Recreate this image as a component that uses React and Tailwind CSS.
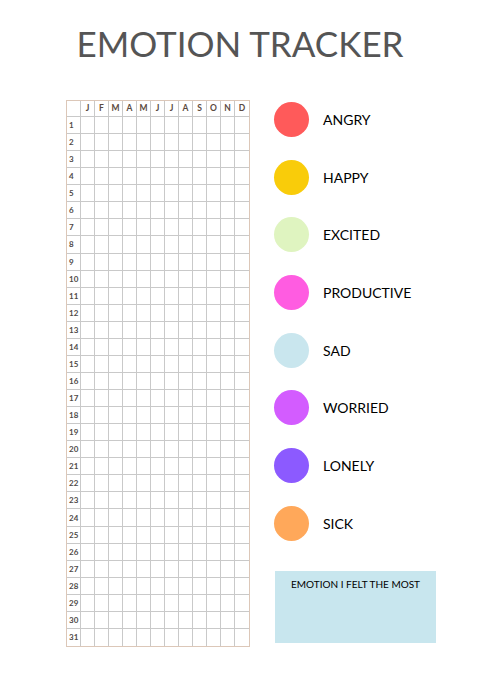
import React from 'react';

const months = ["J", "F", "M", "A", "M", "J", "J", "A", "S", "O", "N", "D"];
const days = Array.from({ length: 31 }, (_, i) => i + 1);

const emotions = [
    { name: "ANGRY", color: "bg-[#ff5a5a]" },
    { name: "HAPPY", color: "bg-[#f9cc0a]" },
    { name: "EXCITED", color: "bg-[#dff4c0]" },
    { name: "PRODUCTIVE", color: "bg-[#ff5ce1]" },
    { name: "SAD", color: "bg-[#c9e6ee]" },
    { name: "WORRIED", color: "bg-[#d35cff]" },
    { name: "LONELY", color: "bg-[#8c5aff]" },
    { name: "SICK", color: "bg-[#ffa85a]" },
];

const App = () => {
    return (
        <div className="w-[480px] h-[679px] bg-white overflow-hidden font-['Lato',sans-serif]">
            <h1 className="pt-[21px] text-center text-[35px] leading-[44px] font-normal text-[#555555] font-['Lato',sans-serif]">
                EMOTION TRACKER
            </h1>

            <div className="flex mt-[35px]">
                {/* year grid */}
                <div className="ml-[66px] w-[184px] h-[547px] border border-[#dcc7b8] grid grid-cols-[14px_repeat(12,1fr)] grid-rows-[16px_repeat(31,1fr)]">
                    <div className="border-r border-b border-[#c9c9c9]" />
                    {months.map((m, i) => (
                        <div
                            key={i}
                            className={`flex items-center justify-center text-[8.5px] font-bold text-[#5b4a40] border-b border-[#c9c9c9] ${i < 11 ? "border-r" : ""}`}
                        >
                            {m}
                        </div>
                    ))}
                    {days.map((d) => (
                        <React.Fragment key={d}>
                            <div className={`flex items-center pl-[2px] text-[8px] font-bold text-[#4f4a47] border-r border-[#c9c9c9] ${d < 31 ? "border-b" : ""}`}>
                                {d}
                            </div>
                            {months.map((m, i) => (
                                <div
                                    key={i}
                                    className={`border-[#c9c9c9] ${i < 11 ? "border-r" : ""} ${d < 31 ? "border-b" : ""}`}
                                />
                            ))}
                        </React.Fragment>
                    ))}
                </div>

                {/* legend */}
                <div className="ml-[24px] mt-[2px] flex flex-col">
                    <div className="flex flex-col gap-[22.7px]">
                        {emotions.map((e) => (
                            <div key={e.name} className="flex items-center h-[35px]">
                                <div className={`w-[35px] h-[35px] rounded-full ${e.color}`} />
                                <span className="ml-[14px] text-[14px] text-black">{e.name}</span>
                            </div>
                        ))}
                    </div>
                    <div className="mt-[30px] ml-[1px] w-[161px] h-[72px] bg-[#c8e6ee]">
                        <p className="pt-[6px] text-center text-[10px] text-black">EMOTION I FELT THE MOST</p>
                    </div>
                </div>
            </div>
        </div>
    );
};

export default App;
